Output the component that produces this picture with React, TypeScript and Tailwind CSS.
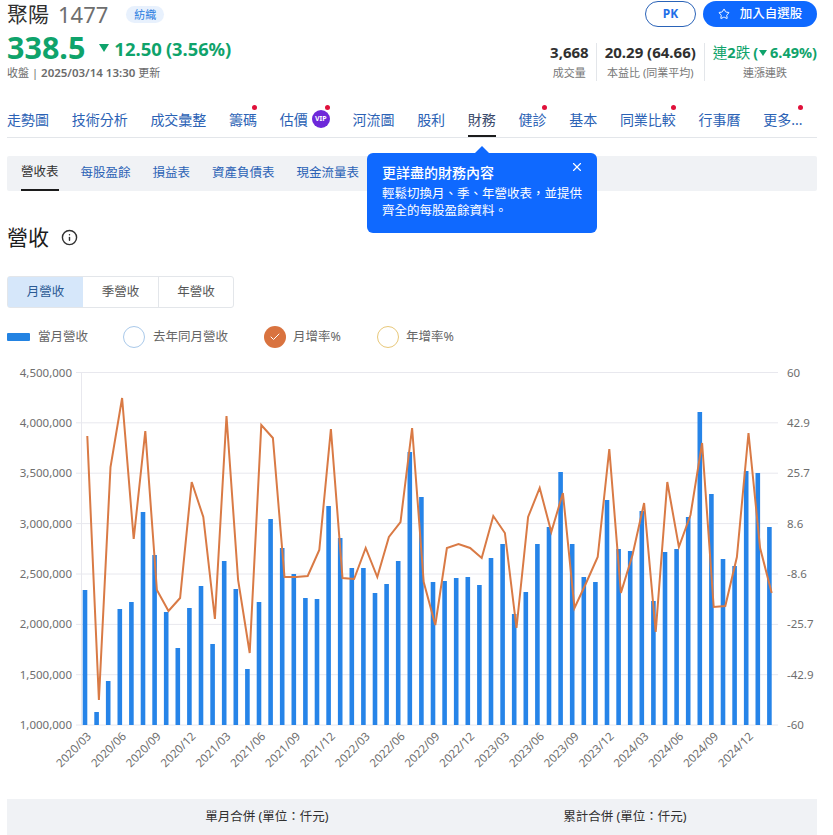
import { Star, X, Info, Check } from "lucide-react";

const font = "font-['Noto_Sans','Noto_Sans_CJK_TC',sans-serif]";

const barTops = [
  590, 712, 681, 609, 602, 512, 555, 612, 648, 608, 586, 644, 561, 589, 669, 602, 519, 548, 574, 598,
  599, 506, 538, 568, 568, 593, 584, 561, 452, 497, 582, 581, 578, 577, 585, 558, 544, 614, 592, 544,
  527, 472, 544, 577, 582, 500, 549, 551, 511, 601, 552, 549, 517, 412, 494, 559, 566, 471, 473, 527,
];

const linePts = [
  436, 700, 467, 398, 539, 431, 590, 611, 598, 482, 517, 619, 416, 580, 653, 425, 438, 577, 577, 576,
  550, 429, 578, 579, 548, 577, 537, 522, 428, 582, 625, 548, 544, 548, 558, 516, 533, 628, 517, 488,
  532, 493, 608, 583, 557, 449, 593, 555, 503, 632, 482, 547, 515, 443, 607, 606, 557, 433, 548, 593,
];

const gridY = [372.5, 422.8, 473.2, 523.6, 574, 624.4, 674.7, 725];
const leftLabels = ["4,500,000", "4,000,000", "3,500,000", "3,000,000", "2,500,000", "2,000,000", "1,500,000", "1,000,000"];
const rightLabels = ["60", "42.9", "25.7", "8.6", "-8.6", "-25.7", "-42.9", "-60"];

const xLabels = [
  "2020/03", "2020/06", "2020/09", "2020/12", "2021/03", "2021/06", "2021/09", "2021/12", "2022/03", "2022/06",
  "2022/09", "2022/12", "2023/03", "2023/06", "2023/09", "2023/12", "2024/03", "2024/06", "2024/09", "2024/12",
];

const navItems = [
  { label: "走勢圖" },
  { label: "技術分析" },
  { label: "成交彙整" },
  { label: "籌碼", dot: true },
  { label: "估價", dot: true, vip: true },
  { label: "河流圖" },
  { label: "股利" },
  { label: "財務", active: true },
  { label: "健診", dot: true },
  { label: "基本" },
  { label: "同業比較", dot: true },
  { label: "行事曆" },
  { label: "更多...", dot: true },
];

const subTabs = ["營收表", "每股盈餘", "損益表", "資產負債表", "現金流量表"];

function RevenueChart() {
  const points = linePts.map((y, i) => `${87.3 + i * 11.6},${y}`).join(" ");
  return (
    <svg width="810" height="430" viewBox="7 360 810 430" className="block">
      {gridY.map((y) => (
        <line key={y} x1="76" x2="778" y1={y} y2={y} stroke="#e8e8ee" strokeWidth="1" />
      ))}
      <line x1="81.5" x2="81.5" y1="372" y2="725" stroke="#e8e8ee" strokeWidth="1" />
      {barTops.map((top, i) => (
        <rect key={i} x={82.7 + i * 11.6} y={top} width="4.6" height={725 - top} fill="#2684e8" />
      ))}
      <polyline points={points} fill="none" stroke="#d97a45" strokeWidth="2" strokeLinejoin="miter" />
      {leftLabels.map((t, i) => (
        <text key={t} x="72" y={gridY[i] + 4} textAnchor="end" fontSize="11.5" fill="#6e6e6e">
          {t}
        </text>
      ))}
      {rightLabels.map((t, i) => (
        <text key={t} x="787" y={gridY[i] + 4} fontSize="11.5" fill="#6e6e6e">
          {t}
        </text>
      ))}
      {xLabels.map((t, i) => {
        const x = 92 + i * 34.84;
        return (
          <text key={t} x={x} y="737" textAnchor="end" fontSize="11.5" fill="#6e6e6e" transform={`rotate(-45 ${x} 737)`}>
            {t}
          </text>
        );
      })}
    </svg>
  );
}

export default function App() {
  return (
    <div className={`${font} relative h-[835px] w-[833px] overflow-hidden bg-white pl-[7px] pr-[16px]`}>
      {/* header */}
      <div className="flex h-[28px] items-center justify-between">
        <div className="flex items-center">
          <span className="text-[21px] leading-[28px] text-[#303030]">聚陽</span>
          <span className="ml-[9px] text-[22px] leading-[28px] text-[#6e6e6e]">1477</span>
          <span className="ml-[18px] rounded-full bg-[#e8f1fd] px-[8px] text-[11px] leading-[17px] text-[#2b7de0]">紡織</span>
        </div>
        <div className="flex items-center gap-[7px]">
          <div className="flex h-[26px] w-[51px] items-center justify-center rounded-full border border-[#2a63b8] text-[12px] font-bold text-[#1f6fe8]">
            PK
          </div>
          <div className="flex h-[26px] w-[114px] items-center justify-center gap-[10px] rounded-full bg-[#0f69ff] text-[12.5px] font-medium text-white">
            <Star className="h-[12px] w-[12px]" strokeWidth={2} />
            <span>加入自選股</span>
          </div>
        </div>
      </div>
      <div className="flex items-start justify-between">
        <div className="mt-[2px]">
          <div className="flex h-[34px] items-center font-bold text-[#0fa36b]">
            <span className="text-[30.5px] leading-[34px]">338.5</span>
            <span className="ml-[14px] mt-[2px] h-0 w-0 border-x-[5px] border-t-[8px] border-x-transparent border-t-[#0fa36b]" />
            <span className="ml-[5px] mt-[3px] text-[18.5px]">12.50</span>
            <span className="ml-[4px] mt-[3px] text-[18.3px]">(3.56%)</span>
          </div>
          <div className="mt-[1px] flex text-[11px] leading-[16px] text-[#6b6b6b]">
            <span>收盤</span>
            <span className="mx-[3px]">|</span>
            <span className="text-[11.5px] font-semibold">2025/03/14 13:30</span>
            <span className="ml-[3px]">更新</span>
          </div>
        </div>
        <div className="mt-[15px] flex text-center">
          <div className="border-r border-[#e3e6ea] pr-[7px]">
            <div className="text-[15px] font-bold leading-[19px] text-[#303030]">3,668</div>
            <div className="mt-[3px] text-[11px] leading-[16px] text-[#777777]">成交量</div>
          </div>
          <div className="border-r border-[#e3e6ea] px-[8px]">
            <div className="text-[15px] font-bold leading-[19px] text-[#303030]">20.29 (64.66)</div>
            <div className="mt-[3px] text-[11px] leading-[16px] text-[#777777]">本益比 (同業平均)</div>
          </div>
          <div className="pl-[8px]">
            <div className="flex items-center text-[14.5px] font-bold leading-[19px] text-[#0fa36b]">
              <span className="font-normal">連</span>2<span className="font-normal">跌</span>
              <span className="ml-[3px]">(</span>
              <span className="mx-[1px] h-0 w-0 border-x-[4px] border-t-[6px] border-x-transparent border-t-[#0fa36b]" />
              <span className="ml-[2px]">6.49%)</span>
            </div>
            <div className="mt-[3px] text-[11px] leading-[16px] text-[#777777]">連漲連跌</div>
          </div>
        </div>
      </div>

      {/* main nav */}
      <div className="mt-[29px] flex h-[28px] items-start gap-[22.7px] border-b border-[#e3e6ea]">
        {navItems.map((item) => (
          <div key={item.label} className="relative flex h-[27px] items-start">
            <span className={`text-[14px] leading-[20px] ${item.active ? "text-[#3a4a6b]" : "text-[#2b62b5]"}`}>{item.label}</span>
            {item.vip && (
              <span className="ml-[4px] flex h-[18px] w-[18px] items-center justify-center rounded-full bg-[#6d28d9] text-[7px] font-bold text-white">
                VIP
              </span>
            )}
            {item.dot && <span className="absolute right-0 top-[-5px] h-[5px] w-[5px] rounded-full bg-[#e0103a]" />}
            {item.active && <span className="absolute inset-x-0 bottom-0 h-[2px] bg-[#1c1c1c]" />}
          </div>
        ))}
      </div>

      {/* sub tabs */}
      <div className="mt-[18px] flex h-[35px] gap-[22px] rounded-[2px] bg-[#f0f2f5] pl-[14px]">
        {subTabs.map((t, i) => (
          <div key={t} className={`flex h-[35px] items-center text-[12.5px] ${i === 0 ? "border-b-2 border-[#1c1c1c] text-[#303030]" : "text-[#2b62b5]"}`}>
            {t}
          </div>
        ))}
      </div>

      {/* heading */}
      <div className="mt-[31px] flex h-[30px] items-center">
        <span className="text-[21px] leading-[30px] text-[#1c1c1c]">營收</span>
        <Info className="ml-[12px] h-[17px] w-[17px] text-[#303030]" strokeWidth={2} />
      </div>

      {/* period buttons */}
      <div className="mt-[24px] flex h-[32px] w-[227px] rounded-[3px] border border-[#e3e6ea] text-[12.5px] text-[#555555]">
        <div className="flex w-[75px] items-center justify-center bg-[#d6e7fa] text-[#2b5a94]">月營收</div>
        <div className="flex w-[76px] items-center justify-center border-r border-[#e3e6ea]">季營收</div>
        <div className="flex flex-1 items-center justify-center">年營收</div>
      </div>

      {/* legend */}
      <div className="mt-[18px] flex h-[22px] items-center text-[12.5px] text-[#666666]">
        <span className="h-[8px] w-[23px] rounded-[1px] bg-[#2383e2]" />
        <span className="ml-[8px]">當月營收</span>
        <span className="ml-[35px] h-[22px] w-[22px] rounded-full border border-[#a9c9ea]" />
        <span className="ml-[8px]">去年同月營收</span>
        <span className="ml-[36px] flex h-[22px] w-[22px] items-center justify-center rounded-full bg-[#d9733f]">
          <Check className="h-[12px] w-[12px] text-white" strokeWidth={2} />
        </span>
        <span className="ml-[7px]">月增率%</span>
        <span className="ml-[36px] h-[22px] w-[22px] rounded-full border border-[#e8c87a]" />
        <span className="ml-[7px]">年增率%</span>
      </div>

      <div className="mt-[12px]">
        <RevenueChart />
      </div>

      {/* bottom bar */}
      <div className="mt-[9px] flex h-[36px] items-center bg-[#f0f2f5] text-[12.5px] text-[#303030]">
        <div className="w-[520px] text-center">單月合併 (單位：仟元)</div>
        <div className="w-[196px] whitespace-nowrap text-center">累計合併 (單位：仟元)</div>
      </div>

      {/* tooltip over the tabs */}
      <div className="absolute left-[367px] top-[153px] h-[80px] w-[230px] rounded-[6px] bg-[#0f69ff] px-[15px] pt-[10px] text-white">
        <span className="absolute left-[108px] top-[-7px] h-0 w-0 border-x-[7px] border-b-[7px] border-x-transparent border-b-[#0f69ff]" />
        <X className="absolute right-[13px] top-[7px] h-[14px] w-[14px]" strokeWidth={2} />
        <div className="text-[14px] font-medium leading-[19px]">更詳盡的財務內容</div>
        <div className="mt-[3px] text-[12.5px] leading-[17px]">輕鬆切換月、季、年營收表，並提供齊全的每股盈餘資料。</div>
      </div>
    </div>
  );
}
